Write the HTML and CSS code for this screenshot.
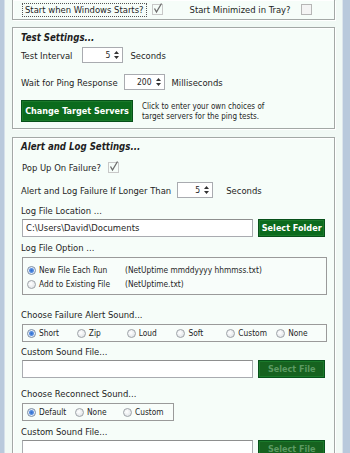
FILE: index.html
```html
<!DOCTYPE html>
<html lang="en">
<head>
    <meta charset="UTF-8">
    <meta name="viewport" content="width=device-width, initial-scale=1.0">
    <title>NetUptime Settings</title>
    <link rel="stylesheet" href="styles.css">
</head>
<body>
    <div class="window">
        <!-- Startup options -->
        <div class="panel panel-top">
            <div class="start-row">
                <span class="focus-label">Start when Windows Starts?</span>
                <span class="check checked"><svg viewBox="0 0 11 11" width="11" height="11"><path d="M2.5 5.5 L4.5 9 L9.5 0.5" fill="none" stroke="#6d6d6d" stroke-width="1.3"/></svg></span>
                <span class="tray-label">Start Minimized in Tray?</span>
                <span class="check"></span>
            </div>
        </div>

        <!-- Test Settings -->
        <div class="panel panel-test">
            <div class="panel-title">Test Settings...</div>
            <div class="row row-interval">
                <span class="label">Test Interval</span>
                <span class="spin spin-interval"><span class="num">5</span><svg class="arrows" viewBox="0 0 5 10" width="5" height="10"><path d="M0 4 L2.5 1 L5 4 Z M0 6 L2.5 9 L5 6 Z" fill="#333"/></svg></span>
                <span class="unit">Seconds</span>
            </div>
            <div class="row row-ping">
                <span class="label">Wait for Ping Response</span>
                <span class="spin spin-ping"><span class="num">200</span><svg class="arrows" viewBox="0 0 5 10" width="5" height="10"><path d="M0 4 L2.5 1 L5 4 Z M0 6 L2.5 9 L5 6 Z" fill="#333"/></svg></span>
                <span class="unit">Milliseconds</span>
            </div>
            <div class="row row-servers">
                <button class="green-button servers-button">Change Target Servers</button>
                <span class="hint">Click to enter your own choices of<br>target servers for the ping tests.</span>
            </div>
        </div>

        <!-- Alert and Log Settings -->
        <div class="panel panel-alert">
            <div class="panel-title">Alert and Log Settings...</div>
            <div class="row row-popup">
                <span class="label">Pop Up On Failure?</span>
                <span class="check checked"><svg viewBox="0 0 11 11" width="11" height="11"><path d="M2.5 5.5 L4.5 9 L9.5 0.5" fill="none" stroke="#6d6d6d" stroke-width="1.3"/></svg></span>
            </div>
            <div class="row row-longer">
                <span class="label">Alert and Log Failure If Longer Than</span>
                <span class="spin spin-longer"><span class="num">5</span><svg class="arrows" viewBox="0 0 5 10" width="5" height="10"><path d="M0 4 L2.5 1 L5 4 Z M0 6 L2.5 9 L5 6 Z" fill="#333"/></svg></span>
                <span class="unit">Seconds</span>
            </div>

            <div class="caption cap-location">Log File Location ...</div>
            <div class="file-row">
                <div class="text-input">C:\Users\David\Documents</div>
                <button class="green-button file-button">Select Folder</button>
            </div>

            <div class="caption cap-option">Log File Option ...</div>
            <div class="group group-option">
                <span class="radio selected"></span><span>New File Each Run</span><span>(NetUptime mmddyyyy hhmmss.txt)</span>
                <span class="radio"></span><span>Add to Existing File</span><span>(NetUptime.txt)</span>
            </div>

            <div class="caption cap-failure">Choose Failure Alert Sound...</div>
            <div class="group group-inline">
                <span class="choice"><span class="radio selected"></span>Short</span>
                <span class="choice"><span class="radio"></span>Zip</span>
                <span class="choice"><span class="radio"></span>Loud</span>
                <span class="choice"><span class="radio"></span>Soft</span>
                <span class="choice"><span class="radio"></span>Custom</span>
                <span class="choice"><span class="radio"></span>None</span>
            </div>

            <div class="caption cap-sound">Custom Sound File...</div>
            <div class="file-row">
                <div class="text-input"></div>
                <button class="green-button file-button disabled">Select File</button>
            </div>

            <div class="caption cap-reconnect">Choose Reconnect Sound...</div>
            <div class="group group-inline group-short">
                <span class="choice"><span class="radio selected"></span>Default</span>
                <span class="choice"><span class="radio"></span>None</span>
                <span class="choice"><span class="radio"></span>Custom</span>
            </div>

            <div class="caption cap-sound2">Custom Sound File...</div>
            <div class="file-row">
                <div class="text-input"></div>
                <button class="green-button file-button disabled">Select File</button>
            </div>
        </div>
    </div>
</body>
</html>
```

FILE: styles.css
```css
body {
    margin: 0;
    font-family: "DejaVu Sans Condensed", "DejaVu Sans", sans-serif;
    font-size: 9.4px;
    color: #1e1e1e;
    background-color: #b9c9dc;
    overflow: hidden;
}

/* Window area between the blue frame edges */
.window {
    margin-left: 4px;
    width: 339px;
    height: 453px;
    background-color: #f1f9f5;
    border-right: 1px solid #dde5ec;
    border-left: 1px solid #d6e0ea;
    box-sizing: border-box;
    padding-left: 7px;
    overflow: hidden;
}

/* Panels */
.panel {
    width: 323px;
    box-sizing: border-box;
    border: 1px solid #a3a8a6;
    box-shadow: inset 1px 1px 0 #ffffff, 1px 1px 0 #ffffff;
    background-color: #f6fdf9;
    padding-left: 8px;
}

.panel-top {
    border-top: none;
    height: 20px;
}

.panel-test {
    margin-top: 7px;
    height: 102px;
    padding-top: 4px;
}

.panel-alert {
    margin-top: 8px;
    height: 330px;
    padding-top: 3px;
    padding-right: 9px;
}

.panel-title {
    font-weight: bold;
    font-style: italic;
    font-size: 9.6px;
    line-height: 12px;
}

/* Top row */
.start-row {
    display: flex;
    align-items: center;
    height: 17px;
    padding-top: 1px;
}

.focus-label {
    border: 1px dotted #555;
    padding: 0 2px;
    line-height: 12px;
    margin-left: 1px;
}

.tray-label {
    margin-left: 27px;
}

.start-row .check {
    margin-left: 5px;
}

.start-row .check:last-child {
    margin-left: 0;
    position: absolute;
    left: 301px;
}

/* Checkbox */
.check {
    display: inline-block;
    width: 9px;
    height: 9px;
    border: 1px solid #b6b6b6;
    background-color: #f4f4f4;
    position: relative;
}

.check.checked {
    border-color: #c8c8c8;
    background-color: transparent;
}

.check svg {
    position: absolute;
    left: -1px;
    top: -2px;
}

/* Rows */
.row {
    display: flex;
    align-items: center;
}

.row-interval {
    margin-top: 3px;
    height: 16px;
}

.row-ping {
    margin-top: 11px;
    height: 16px;
}

.row-servers {
    margin-top: 10px;
}

.row-popup {
    margin-top: 8px;
    height: 12px;
    padding-left: 1px;
}

.row-popup .check {
    margin-left: 7px;
}

.row-longer {
    margin-top: 9px;
    height: 16px;
}

/* Spin box */
.spin {
    display: inline-flex;
    align-items: center;
    justify-content: flex-end;
    height: 16px;
    box-sizing: border-box;
    border: 1px solid #a9abb0;
    background-color: #fff;
    font-size: 8.5px;
    padding-right: 3px;
}

.arrows {
    margin-left: 4px;
}

.spin-interval {
    width: 41px;
    margin-left: 10px;
}

.spin-ping {
    width: 41px;
    margin-left: 6px;
}

.spin-longer {
    width: 36px;
    margin-left: 6px;
}

.unit {
    margin-left: 7px;
}

.spin-longer + .unit {
    margin-left: 13px;
}

/* Green buttons */
.green-button {
    font-family: inherit;
    font-size: 9px;
    font-weight: bold;
    white-space: nowrap;
    color: #ffffff;
    background-color: #0b6b1d;
    border: 1px solid #07501a;
    box-shadow: inset 0 0 0 1px #1b7a2b;
    padding: 0;
    cursor: pointer;
}

.green-button.disabled {
    background-color: #16621f;
    color: #5c9b63;
    cursor: default;
}

.servers-button {
    width: 112px;
    height: 22px;
}

.hint {
    margin-left: 9px;
    font-size: 8px;
    line-height: 10px;
    margin-top: 2px;
}

/* Captions and file rows */
.caption {
    line-height: 12px;
}

.cap-location {
    margin-top: 7px;
}

.cap-option {
    margin-top: 5px;
}

.cap-failure {
    margin-top: 14px;
}

.cap-sound {
    margin-top: 4px;
}

.cap-reconnect {
    margin-top: 10px;
}

.cap-sound2 {
    margin-top: 5px;
}

.file-row {
    display: flex;
    margin-top: 2px;
    gap: 5px;
    padding-left: 1px;
}

.text-input {
    width: 233px;
    height: 18px;
    box-sizing: border-box;
    border: 1px solid #a9abb0;
    border-top-color: #8e8f8f;
    background-color: #fff;
    padding-left: 3px;
    line-height: 16px;
}

.file-button {
    width: 67px;
    height: 18px;
}

/* Radio groups */
.group {
    margin-top: 3px;
    margin-left: 1px;
    border: 1px solid #9a9a9a;
    background-color: #f8fdfa;
    box-sizing: border-box;
    font-size: 8.3px;
}

.group-option {
    display: grid;
    grid-template-columns: 12px 86px auto;
    grid-auto-rows: 14px;
    align-items: center;
    width: 305px;
    height: 38px;
    padding: 5px 0 0 4px;
}

.group-inline {
    display: flex;
    align-items: center;
    width: 305px;
    height: 18px;
    padding-left: 4px;
}

.group-short {
    width: 152px;
}

.choice {
    display: inline-flex;
    align-items: center;
    width: 50px;
}

.group-short .choice {
    width: 48px;
}

/* Radio button */
.radio {
    display: inline-block;
    width: 9px;
    height: 9px;
    border-radius: 50%;
    border: 1px solid #9ea3a8;
    background: radial-gradient(circle at 40% 40%, #ffffff, #d9dde1);
    margin-right: 3px;
    box-sizing: border-box;
}

.radio.selected {
    border-color: #7d8ea3;
    background: radial-gradient(circle, #2f6fd1 0, #5b90e0 2px, #e6eefa 3px, #dfe4ea 5px);
}
```
